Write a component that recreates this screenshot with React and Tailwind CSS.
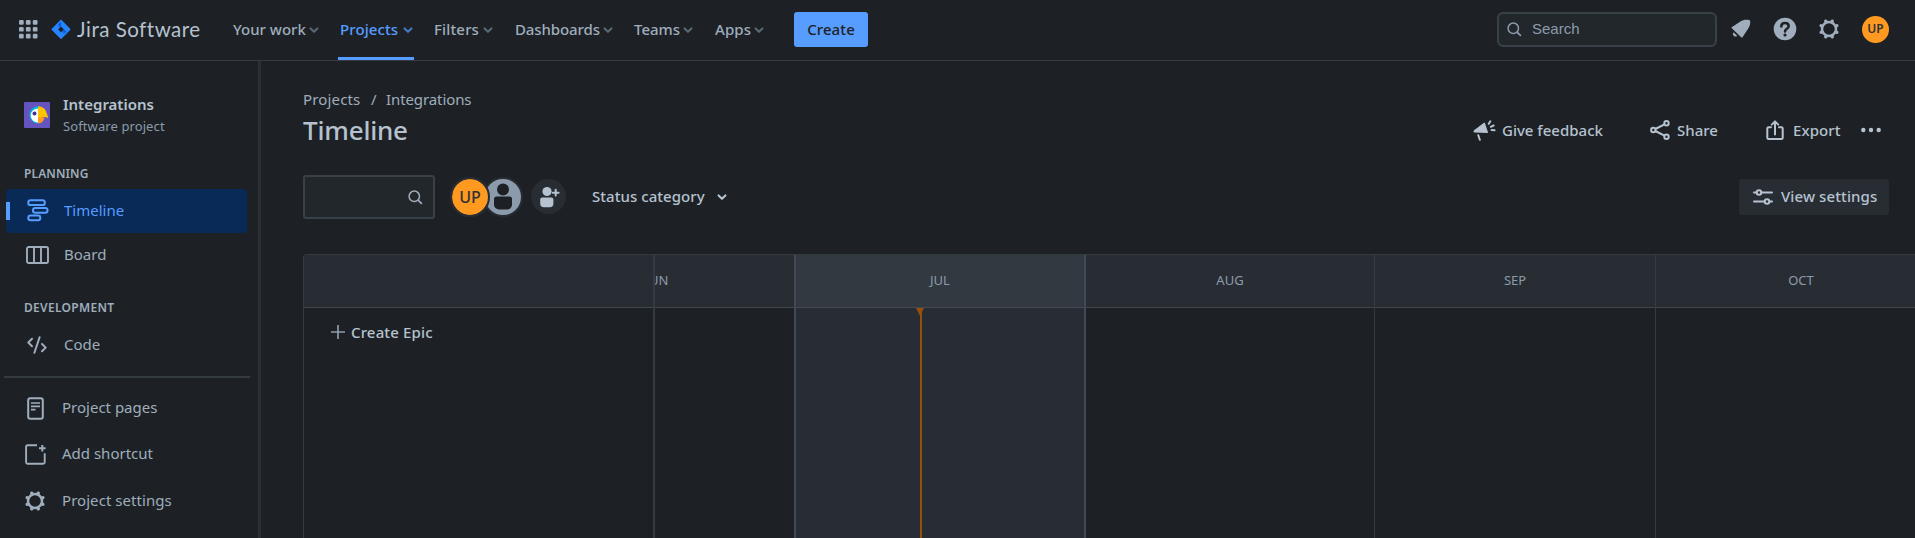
function Chevron({ className = "" }) {
  return (
    <svg width="10" height="7" viewBox="0 0 10 7" fill="none" stroke="currentColor" strokeWidth="2.1" strokeLinecap="round" strokeLinejoin="round" className={"shrink-0 " + className}>
      <path d="M1.6 1.4 5 4.8 8.4 1.4" />
    </svg>
  );
}

function SearchIcon({ className = "" }) {
  return (
    <svg width="15" height="15" viewBox="0 0 15 15" fill="none" stroke="currentColor" strokeLinecap="round" className={"shrink-0 " + className}>
      <circle cx="6.3" cy="6.3" r="5.2" strokeWidth="1.5" />
      <path d="m10.3 10.3 3.1 3.1" strokeWidth="1.7" />
    </svg>
  );
}

function GearIcon({ className = "" }) {
  const teeth = [22.5, 67.5, 112.5, 157.5, 202.5, 247.5, 292.5, 337.5];
  return (
    <svg width="22" height="22" viewBox="0 0 22 22" fill="none" stroke="currentColor" className={"shrink-0 " + className}>
      <circle cx="11" cy="11" r="7" strokeWidth="2.5" />
      {teeth.map((a) => (
        <path key={a} d="M11 3.4V2.5" strokeWidth="3.4" strokeLinecap="round" transform={`rotate(${a} 11 11)`} />
      ))}
    </svg>
  );
}

function JiraLogo() {
  return (
    <svg width="20" height="21" viewBox="0 0 20 21" className="shrink-0">
      <defs>
        <linearGradient id="jl" x1="0.9" y1="0.1" x2="0.4" y2="0.7">
          <stop offset="0.2" stopColor="#0052cc" />
          <stop offset="1" stopColor="#2684ff" />
        </linearGradient>
      </defs>
      <path d="M10 .6 19.2 9.7a1 1 0 0 1 0 1.4L10 20.2.8 11.1a1 1 0 0 1 0-1.4Z" fill="#2684ff" />
      <path d="M10 3v4.500L7 10.400 4.600 7.800Z" fill="url(#jl)" />
      <path d="M10 17.800v-4.500l3-2.900 2.400 2.600Z" fill="url(#jl)" />
      <path d="m10 7.5 2.9 2.9-2.9 2.9-2.9-2.9Z" fill="#1d2125" />
    </svg>
  );
}

function NavItem({ label, className, chevron = "text-[#596773]", active }) {
  return (
    <a className={"relative flex h-full items-center justify-between pb-[2px] " + className}>
      <span>{label}</span>
      <Chevron className={"mt-[2px] " + chevron} />
      {active && <span className="absolute -left-[2px] bottom-0 h-[3px] w-[76px] bg-[#579dff]" />}
    </a>
  );
}

function TopBar() {
  return (
    <header className="flex h-[61px] shrink-0 items-center border-b border-[#343b43] pl-[18px] text-[15px] font-medium text-[#9fadbc]">
      <svg width="19" height="19" viewBox="0 0 19 19" fill="currentColor" className="-mt-[2px] ml-px shrink-0">
        {[0, 6.9, 13.8].map((y) => [0, 6.9, 13.8].map((x) => <rect key={x + "-" + y} x={x} y={y} width="4.700" height="4.700" rx="1.200" />))}
      </svg>
      <div className="-mt-[2px] ml-[13px] flex items-center">
        <JiraLogo />
        <span className="-mt-[1px] ml-[6px] w-[150px] font-['Lato',sans-serif] text-[20.5px] leading-6 font-normal tracking-[0.5px] text-[#b6c2cf]">Jira Software</span>
      </div>
      <nav className="flex h-full items-center">
        <NavItem label="Your work" className="ml-[6px] w-[86px]" />
        <NavItem label="Projects" className="ml-[21px] w-[73px] tracking-[0.1px] text-[#579dff]" chevron="text-[#4478c4]" active />
        <NavItem label="Filters" className="ml-[21px] w-[59px] tracking-[0.15px]" />
        <NavItem label="Dashboards" className="ml-[22px] w-[98px] tracking-[-0.1px]" />
        <NavItem label="Teams" className="ml-[21px] w-[59px]" />
        <NavItem label="Apps" className="ml-[22px] w-[49px] tracking-[0.1px]" />
      </nav>
      <button className="-mt-[2px] ml-[30px] h-[35px] w-[74px] rounded-[3px] bg-[#579dff] tracking-[0.1px] text-[#1d2125]">Create</button>
      <div className="-mt-[2px] mr-[26px] ml-auto flex items-center">
        <div className="flex h-[35px] w-[220px] items-center rounded-[6px] border-2 border-[#38414a] bg-[#22272b] pl-[8px] text-[#8c9bab]">
          <SearchIcon />
          <span className="ml-[10px] font-['Liberation_Sans',Arial,sans-serif] text-[15px] font-normal">Search</span>
        </div>
        <svg width="20" height="20" viewBox="0 0 20 20" fill="currentColor" className="ml-[14px]">
          <path d="M10.200 2C12.600.6 15.800.4 18 .9c.9.2 1.200.6 1.200 1.300.2 2.500-.4 5-2 7.200l-5.500 8.600c-.4.600-1 .700-1.500.200L.8 9.300c-.5-.5-.4-1 .2-1.300Z" />
          <path d="M2.600 13.200a2.500 2.500 0 0 0 3.600 3.500Z" />
        </svg>
        <svg width="24" height="24" viewBox="0 0 24 24" fill="none" className="ml-[22px]">
          <circle cx="12" cy="12" r="11.300" fill="currentColor" />
          <path d="M8.300 9.400c0-2.100 1.600-3.400 3.700-3.400s3.700 1.300 3.700 3.200c0 2.500-3.700 2.600-3.700 5.200" stroke="#1d2125" strokeWidth="2.500" strokeLinecap="round" />
          <circle cx="12" cy="18" r="1.600" fill="#1d2125" />
        </svg>
        <GearIcon className="ml-[21px]" />
        <span className="ml-[22px] flex size-[27px] items-center justify-center rounded-full bg-[#ff991f] text-[12px] font-semibold text-[#2c333a]">UP</span>
      </div>
    </header>
  );
}

function ProjectAvatar() {
  return (
    <svg width="26" height="26" viewBox="0 0 26 26" className="shrink-0 rounded-[1px]">
      <rect width="26" height="26" fill="#6554c0" />
      <path d="M14 4.200a8.600 8.600 0 0 0 0 17.200Z" fill="#00b8d9" />
      <path d="M14 6.500a7.300 7 0 0 0 0 14Z" fill="#fff" />
      <path d="M14 4.200c4.500 0 8 3 8.700 7 .5 1.500 1.300 2.600 1.300 4.800-1.500-1-2.800-1.200-4.200-1-2 .3-3.500 2-5.800 2Z" fill="#ffc400" />
      <path d="M14 15.500h6.500c-.5 3.400-3 5.900-6.500 5.900Z" fill="#ff991f" />
      <circle cx="10.500" cy="11.500" r="2" fill="#403294" />
    </svg>
  );
}

function TimelineIcon() {
  return (
    <svg width="22" height="23" viewBox="0 0 22 23" fill="none" stroke="currentColor" strokeWidth="2" className="mb-[1px] shrink-0">
      <rect x="1.300" y="1.300" width="16.500" height="4.800" rx="2.200" />
      <rect x="6" y="8.900" width="14.500" height="4.800" rx="2.200" />
      <rect x="1.300" y="16.500" width="12" height="4.800" rx="2.200" />
    </svg>
  );
}

function BoardIcon() {
  return (
    <svg width="23" height="18" viewBox="0 0 23 18" fill="none" stroke="currentColor" strokeWidth="1.900" className="shrink-0">
      <rect x="1" y="1" width="21" height="16" rx="1.800" />
      <path d="M8 1v16M15 1v16" />
    </svg>
  );
}

function CodeIcon() {
  return (
    <svg width="20" height="18" viewBox="0 0 20 18" fill="none" stroke="currentColor" strokeWidth="2" strokeLinecap="round" strokeLinejoin="round" className="mb-[1px] shrink-0">
      <path d="M5 2.800 1.300 6.500 5 10.200M15 8l3.700 3.600L15 15.200M12.600 1.200 7.400 16.800" />
    </svg>
  );
}

function Sidebar() {
  return (
    <aside className="flex w-[261px] shrink-0 flex-col border-r-[3px] border-[#2b2f36] text-[15px] leading-5 text-[#9fadbc]">
      <div className="mt-[34px] flex h-[40px] items-center pl-[24px]">
        <ProjectAvatar />
        <div className="ml-[13px]">
          <div className="text-[15px] leading-5 font-semibold text-[#b6c2cf]">Integrations</div>
          <div className="mt-[2px] text-[13px] leading-5 tracking-[0.1px] text-[#8c9bab]">Software project</div>
        </div>
      </div>
      <h2 className="mt-[29px] pl-[24px] text-[12px] leading-5 font-semibold tracking-[0.1px]">PLANNING</h2>
      <div className="relative mt-[5px] ml-[6px] flex h-[44px] w-[241px] items-center rounded-[4px] bg-[#092957] pl-[21px] text-[#579dff]">
        <span className="absolute top-[13px] left-0 h-[18px] w-[4px] bg-[#579dff]" />
        <TimelineIcon />
        <span className="ml-[15px] pb-[2px]">Timeline</span>
      </div>
      <div className="flex h-[44px] items-center pl-[26px]">
        <BoardIcon />
        <span className="ml-[15px] pb-[2px]">Board</span>
      </div>
      <h2 className="mt-[21px] pl-[24px] text-[12px] leading-5 font-semibold tracking-[0.3px]">DEVELOPMENT</h2>
      <div className="mt-[5px] flex h-[44px] items-center pl-[27px]">
        <CodeIcon />
        <span className="ml-[17px] pb-[2px]">Code</span>
      </div>
      <div className="mt-[9px] ml-[4px] h-[2px] w-[246px] bg-[#343c42]" />
      <div className="mt-[7px] flex h-[46px] items-center pl-[27px]">
        <svg width="17" height="23" viewBox="0 0 17 23" fill="none" stroke="currentColor" strokeWidth="2" className="mt-[1px] shrink-0">
          <rect x="1.200" y="1.200" width="14.600" height="20.600" rx="2" />
          <path d="M4 6h9M4 9.300h9M4 12.600h4.500" strokeWidth="1.700" />
        </svg>
        <span className="ml-[18px] pb-[2px]">Project pages</span>
      </div>
      <div className="flex h-[46px] items-center pl-[25px]">
        <svg width="21" height="21" viewBox="0 0 21 21" fill="none" stroke="currentColor" strokeWidth="1.900" className="mt-[1px] shrink-0">
          <path d="M12 1.200H2.600a1.500 1.500 0 0 0-1.500 1.500v15.600a1.500 1.500 0 0 0 1.500 1.500h15.600a1.500 1.500 0 0 0 1.500-1.500V9.200" />
          <path d="M17.300 1v6.400M14 4.200h6.600" strokeWidth="2" />
        </svg>
        <span className="ml-[16px] pb-[2px]">Add shortcut</span>
      </div>
      <div className="flex h-[47px] items-center pl-[24px]">
        <GearIcon />
        <span className="ml-[16px] pb-[1px] tracking-[0.05px]">Project settings</span>
      </div>
    </aside>
  );
}

function Actions() {
  return (
    <div className="mr-[34px] flex h-[36px] items-center font-medium text-[#b6c2cf]">
      <svg width="23" height="21" viewBox="0 0 23 21" fill="none" stroke="currentColor" strokeWidth="2" strokeLinecap="round" className="shrink-0">
        <path d="M11 2.800 1 10.300c-.8.700-.6 2.200.6 2.300l12.600.5c.6 0 .9-.4.700-1l-3-9c-.2-.5-.5-.6-.9-.3Z" fill="currentColor" stroke="none" />
        <path d="m5.300 15.300 1.500 4.500M15.800 3.800l1.500-2.500M17.800 6.800l2.800-1.300M18.600 10l3 .2" />
      </svg>
      <span className="ml-[6px] w-[102px]">Give feedback</span>
      <svg width="20" height="20" viewBox="0 0 20 20" fill="none" stroke="currentColor" strokeWidth="2" className="ml-[46px] shrink-0">
        <circle cx="3.300" cy="10" r="2.200" />
        <circle cx="16.500" cy="3.300" r="2.200" />
        <circle cx="16.500" cy="16.700" r="2.200" />
        <path d="m5.300 9 9.200-4.700M5.300 11l9.200 4.700" />
      </svg>
      <span className="ml-[7px] w-[42px]">Share</span>
      <svg width="18" height="20" viewBox="0 0 18 20" fill="none" stroke="currentColor" strokeWidth="2" strokeLinecap="round" strokeLinejoin="round" className="ml-[47px] shrink-0">
        <path d="M5 7.200H2.600A1.300 1.300 0 0 0 1.300 8.500v9.200A1.300 1.300 0 0 0 2.600 19h12.800a1.300 1.300 0 0 0 1.300-1.300V8.500a1.300 1.300 0 0 0-1.300-1.300H13M9 14.500V2M5.800 4.600 9 1.400l3.200 3.200" />
      </svg>
      <span className="ml-[9px] w-[48px] tracking-[0.1px]">Export</span>
      <svg width="20" height="6" viewBox="0 0 20 6" fill="currentColor" className="ml-[20px] shrink-0">
        <circle cx="2.300" cy="3" r="2.200" />
        <circle cx="10" cy="3" r="2.200" />
        <circle cx="17.700" cy="3" r="2.200" />
      </svg>
    </div>
  );
}

function Toolbar() {
  return (
    <div className="mt-[27px] flex h-[44px] items-center font-medium text-[#b6c2cf]">
      <div className="flex h-[44px] w-[132px] items-center justify-end rounded-[3px] border-2 border-[#38414a] bg-[#22272b] pr-[10px] text-[#9fadbc]">
        <SearchIcon />
      </div>
      <div className="ml-[15px] flex items-center">
        <span className="z-10 flex size-[40px] items-center justify-center rounded-full border-2 border-[#282d34] bg-[#ff991f] bg-clip-padding text-[16px] text-[#2c333a]">UP</span>
        <svg width="40" height="40" viewBox="0 0 40 40" className="-ml-[7px] shrink-0">
          <circle cx="20" cy="20" r="20" fill="#282d34" />
          <circle cx="20" cy="20" r="18" fill="#8c9bab" />
          <circle cx="20" cy="12.500" r="6" fill="#1d2125" />
          <path d="M11 22a2.500 2.500 0 0 1 2.500-2.500h13A2.500 2.500 0 0 1 29 22v5.500a5 5 0 0 1-5 5h-8a5 5 0 0 1-5-5Z" fill="#1d2125" />
        </svg>
        <svg width="35" height="35" viewBox="0 0 35 35" className="-mt-[1px] ml-[8px] shrink-0 text-[#b6c2cf]">
          <circle cx="17.500" cy="17.500" r="17.500" fill="#282d34" />
          <circle cx="16" cy="12.500" r="4.600" fill="currentColor" />
          <path d="M9.200 20.500a2 2 0 0 1 2-2h9.200a2 2 0 0 1 2 2v4a3.800 3.800 0 0 1-3.800 3.800H13a3.800 3.800 0 0 1-3.800-3.800Z" fill="currentColor" />
          <path d="M24.700 10.800v5.800M21.800 13.700h5.800" stroke="currentColor" strokeWidth="2" strokeLinecap="round" />
        </svg>
      </div>
      <span className="ml-[26px] w-[113px] pb-[2px] tracking-[0.05px]">Status category</span>
      <Chevron className="ml-[12px] mt-[1px]" />
      <button className="mr-[26px] ml-auto flex h-[36px] w-[150px] items-center rounded-[3px] bg-[#282d34] pl-[14px]">
        <svg width="20" height="16" viewBox="0 0 20 16" fill="none" stroke="currentColor" strokeWidth="2" strokeLinecap="round" className="shrink-0">
          <path d="M1 3.500h2.500M8.500 3.500H19M1 12.500h10.500M16.500 12.500H19" />
          <circle cx="6" cy="3.500" r="2.300" />
          <circle cx="14" cy="12.500" r="2.300" />
        </svg>
        <span className="ml-[8px] pb-[2px] tracking-[0.1px]">View settings</span>
      </button>
    </div>
  );
}

const head = "flex h-[53px] shrink-0 items-center justify-center border-b border-[#3f474f] pb-[2px] ";

function Timeline() {
  return (
    <div className="mt-[35px] flex flex-1 overflow-hidden rounded-tl-[4px] border-t border-l border-[#333b41] text-[13px] text-[#8c9bab]">
      <div className="w-[349px] shrink-0">
        <div className={head + "bg-[#282d34]"} />
        <div className="mt-[14px] flex items-center pl-[27px] text-[15px] leading-5 font-medium text-[#b6c2cf]">
          <svg width="14" height="14" viewBox="0 0 14 14" stroke="#8c9bab" strokeWidth="1.700" className="shrink-0">
            <path d="M7 0v14M0 7h14" />
          </svg>
          <span className="ml-[6px] tracking-[0.15px]">Create Epic</span>
        </div>
      </div>
      <div className="w-[141px] shrink-0 overflow-hidden border-l-2 border-[#343b42]">
        <div className={head + "bg-[#282d34]"}>
          <span className="-ml-[135px] w-[282px] shrink-0 text-center">JUN</span>
        </div>
      </div>
      <div className="flex w-[292px] shrink-0 flex-col border-x-2 border-[#414a54] bg-[#282c34]">
        <div className={head + "bg-[#323940]"}>JUL</div>
        <div className="relative flex-1">
          <svg width="8" height="8" viewBox="0 0 8 8" className="absolute top-0 left-[120px]">
            <path d="M0 0h8L4 8Z" fill="#974f0c" />
          </svg>
          <span className="absolute top-0 bottom-0 left-[124px] w-[2px] bg-[#974f0c]" />
        </div>
      </div>
      <div className="w-[288px] shrink-0">
        <div className={head + "bg-[#282d34]"}>AUG</div>
      </div>
      <div className="w-[281px] shrink-0 border-l border-[#353c44]">
        <div className={head + "bg-[#282d34]"}>SEP</div>
      </div>
      <div className="w-[291px] shrink-0 border-l border-[#353c44]">
        <div className={head + "bg-[#282d34]"}>OCT</div>
      </div>
    </div>
  );
}

export default function App() {
  return (
    <div className="flex h-[538px] w-[1915px] flex-col overflow-hidden bg-[#1d2125] font-['Noto_Sans',sans-serif] whitespace-nowrap">
      <TopBar />
      <div className="flex min-h-0 flex-1">
        <Sidebar />
        <main className="flex min-w-0 flex-1 flex-col pl-[42px] text-[15px] leading-5">
          <div className="mt-[28px] flex text-[#9fadbc]">
            <span className="w-[68px] tracking-[0.15px]">Projects</span>
            <span className="w-[15px]">/</span>
            <span className="tracking-[-0.1px]">Integrations</span>
          </div>
          <div className="mt-[3px] flex items-center justify-between">
            <h1 className="text-[26px] leading-[36px] font-medium tracking-[-0.2px] text-[#b6c2cf]">Timeline</h1>
            <Actions />
          </div>
          <Toolbar />
          <Timeline />
        </main>
      </div>
    </div>
  );
}
